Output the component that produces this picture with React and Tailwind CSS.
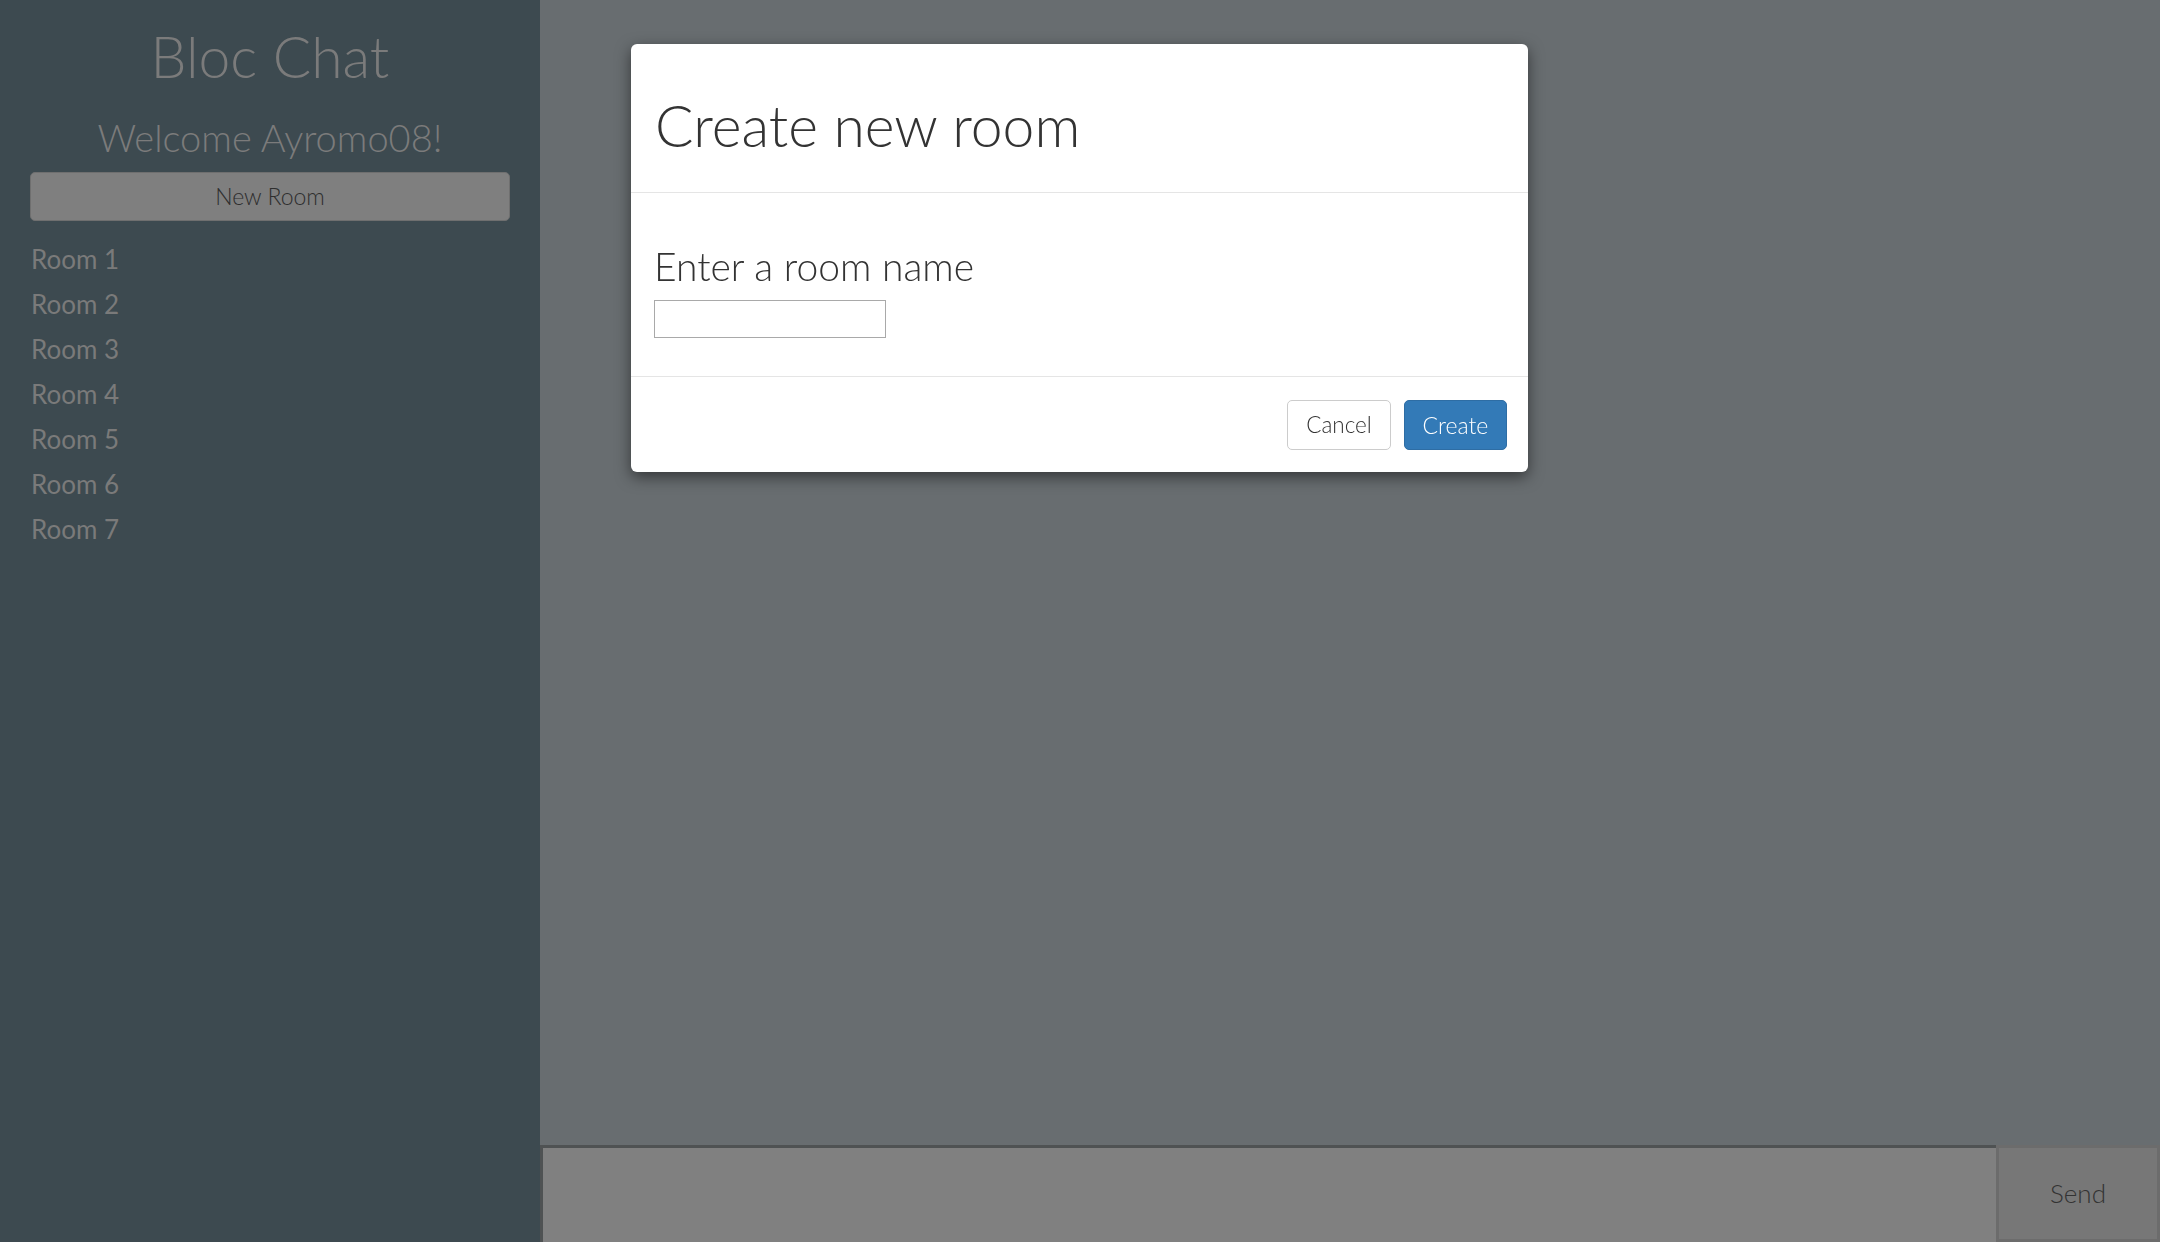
import React from "react";

const rooms = ["Room 1", "Room 2", "Room 3", "Room 4", "Room 5", "Room 6", "Room 7"];

export default function App() {
  return (
    <div
      className="flex w-[2160px] h-[1242px] overflow-hidden"
      style={{ fontFamily: "Lato, 'Open Sans', sans-serif" }}
    >
      <aside className="w-[540px] shrink-0 bg-[#3d4a50] flex flex-col">
        <h1 className="mt-[28px] text-center text-[57px] leading-none font-light text-[#7b7b7b]">
          Bloc Chat
        </h1>
        <h2 className="mt-[33px] text-center text-[38px] leading-none font-light text-[#7b7b7b]">
          Welcome Ayromo08!
        </h2>
        <button className="mx-[30px] mt-[16px] h-[49px] rounded-[5px] border border-[#6f6f6f] bg-[#7f7f7f] text-[23px] font-light text-[#2e2e2e]">
          New Room
        </button>
        <ul className="mt-[16px] px-[31px]">
          {rooms.map((r) => (
            <li key={r} className="text-[26px] leading-[45px] text-[#7a7a7a]">
              {r}
            </li>
          ))}
        </ul>
      </aside>

      <main className="flex-1 flex flex-col bg-[#686d70]">
        <div className="flex-1" />
        <div className="h-[97px] flex">
          <div className="flex-1 bg-[#808080] border-t-[3px] border-l-[3px] border-[#4f5253]" />
          <button className="w-[164px] bg-[#777777] border-[3px] border-[#6c6c6c] text-[26px] font-light text-[#333]">
            Send
          </button>
        </div>
      </main>

      <div className="fixed left-[631px] top-[44px] w-[897px] bg-white rounded-[6px] shadow-[0_5px_15px_rgba(0,0,0,0.5)] text-[#333]">
        <div className="px-[24px] pt-[53px] h-[149px] border-b border-[#e5e5e5]">
          <h3 className="text-[57px] leading-none font-light">Create new room</h3>
        </div>
        <div className="px-[23px] pt-[54px] pb-[38px] border-b border-[#e5e5e5]">
          <label className="block text-[39px] leading-none font-light">Enter a room name</label>
          <input className="block mt-[14px] w-[232px] h-[38px] border border-[#a9a9a9] outline-none" />
        </div>
        <div className="flex justify-end gap-[13px] pt-[23px] pb-[22px] pr-[21px]">
          <button className="w-[104px] h-[50px] rounded-[5px] border border-[#cccccc] bg-white text-[22.5px] font-light text-[#333]">
            Cancel
          </button>
          <button className="w-[103px] h-[50px] rounded-[5px] border border-[#2e6da4] bg-[#337ab7] text-[23px] font-light text-white">
            Create
          </button>
        </div>
      </div>
    </div>
  );
}
